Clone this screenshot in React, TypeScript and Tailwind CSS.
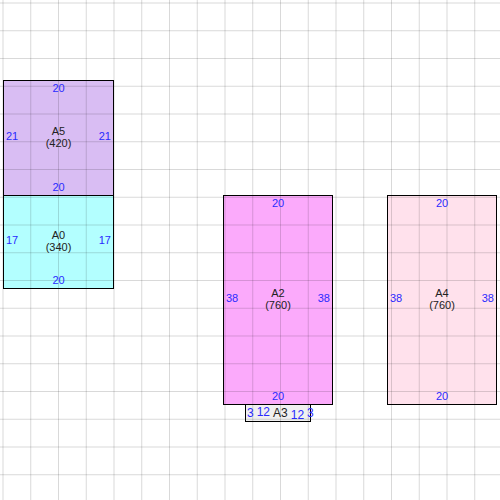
const grid =
  "pointer-events-none absolute inset-0 bg-[linear-gradient(to_right,rgba(0,0,0,0.15)_1px,transparent_1px),linear-gradient(to_bottom,rgba(0,0,0,0.15)_1px,transparent_1px)] bg-[size:27.75px_27.75px] bg-[position:2.5px_2.5px]";

type Box = { name: string; val: number; x: number; y: number; w: number; h: number; bg: string; t: string; b: string; l: string; r: string };

const boxes: Box[] = [
  { name: "A5", val: 420, x: 3, y: 80, w: 111, h: 116, bg: "#d9bdf3", t: "20", b: "20", l: "21", r: "21" },
  { name: "A0", val: 340, x: 3, y: 195, w: 111, h: 94, bg: "#b3ffff", t: "", b: "20", l: "17", r: "17" },
  { name: "A2", val: 760, x: 223, y: 195, w: 110, h: 210, bg: "#fbaafb", t: "20", b: "20", l: "38", r: "38" },
  { name: "A4", val: 760, x: 387, y: 195, w: 110, h: 210, bg: "#ffe1ec", t: "20", b: "20", l: "38", r: "38" },
];

export default function App() {
  return (
    <div
      className="relative h-[500px] w-[500px] overflow-hidden bg-white text-[11px] leading-none"
      style={{ fontFamily: '"Liberation Sans", Arial, sans-serif' }}
    >
      {boxes.map((b) => (
        <div key={b.name} className="absolute border border-black" style={{ left: b.x, top: b.y, width: b.w, height: b.h, background: b.bg }} />
      ))}
      <div className="absolute border border-black bg-[#f0f0f0]" style={{ left: 245, top: 404, width: 66, height: 18 }} />
      <div className={grid} />
      {boxes.map((b) => (
        <div key={b.name + "t"} className="absolute flex flex-col" style={{ left: b.x, top: b.y, width: b.w, height: b.h }}>
          <div className="h-[14px] pt-[3px] text-center text-[#2a2aff]">{b.t}</div>
          <div className="-mt-[3px] flex flex-1 items-center justify-between px-[3px]">
            <span className="text-[#2a2aff]">{b.l}</span>
            <span className="text-center leading-[12px] text-[#222]">
              {b.name}
              <br />({b.val})
            </span>
            <span className="text-[#2a2aff]">{b.r}</span>
          </div>
          <div className="h-[14px] text-center text-[#2a2aff]">{b.b}</div>
        </div>
      ))}
      <div className="absolute flex items-center gap-[3px] pl-[2px] text-[12px] text-[#2a2aff]" style={{ left: 245, top: 404, width: 66, height: 18 }}>
        <span>3</span>
        <span className="-mt-[3px]">12</span>
        <span className="text-[#222]">A3</span>
        <span className="mt-[3px]">12</span>
        <span>3</span>
      </div>
    </div>
  );
}
